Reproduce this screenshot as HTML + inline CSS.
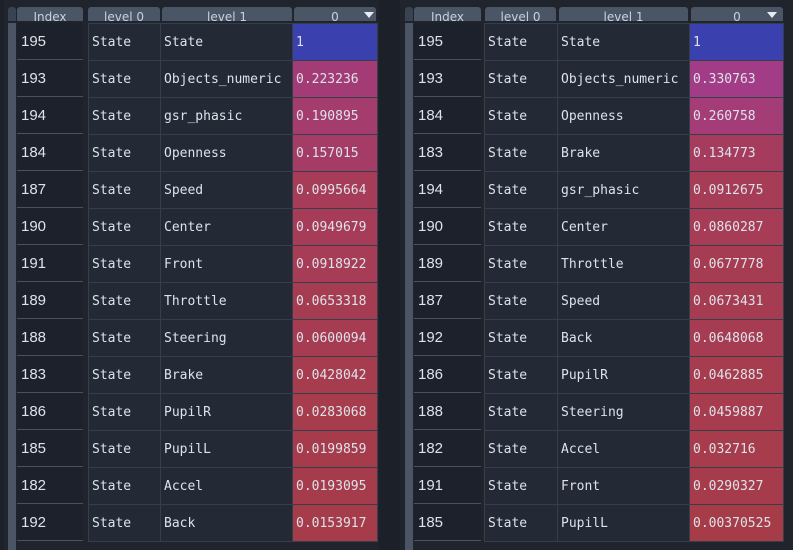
<!DOCTYPE html><html><head><style>
body{margin:0;width:793px;height:550px;background:#1b2029;overflow:hidden;position:relative;font-family:"DejaVu Sans Mono","Liberation Mono",monospace;color:#dde3ea}
.p{position:absolute;top:0;height:550px;background:#1f242d}
.g{position:absolute;top:23px;width:8px;height:527px;background:#4b5566}
.hd{position:absolute;top:7px;height:14px;background:#4a5566;color:#c9d1dc;font:12px "DejaVu Sans",sans-serif;text-align:center;line-height:20px;overflow:hidden;border-radius:3px 3px 0 0}
table{position:absolute;top:23px;border-collapse:collapse;table-layout:fixed}
td{height:34px;padding:2px 0 0 3px;font-size:13px;white-space:nowrap;overflow:hidden;vertical-align:middle;line-height:34px}
.d td{border:1px solid #363e4c;background:#232935}
.i td{border-bottom:1px solid #4a5262;background:#1c212b;font-family:"Liberation Sans",sans-serif;font-size:15px;padding:2px 0 0 4px;height:34px;line-height:34px}
.tri{position:absolute;top:12px;width:0;height:0;border-left:5px solid transparent;border-right:5px solid transparent;border-top:6px solid #e8ecf2}
</style></head><body>
<div class="p" style="left:4px;width:375px"></div>
<div class="p" style="left:400px;width:393px"></div>
<div class="g" style="left:8px"></div>
<div class="g" style="left:405px"></div>
<div class="hd" style="left:8px;width:8px;background:#3a4352"></div>
<div class="hd" style="left:17px;width:66px">Index</div>
<div class="hd" style="left:88px;width:72px">level 0</div>
<div class="hd" style="left:162px;width:130px">level 1</div>
<div class="hd" style="left:294px;width:82px">0</div>
<div class="tri" style="left:364px"></div>
<div class="hd" style="left:405px;width:8px;background:#3a4352"></div>
<div class="hd" style="left:414px;width:67px">Index</div>
<div class="hd" style="left:485px;width:71px">level 0</div>
<div class="hd" style="left:559px;width:129px">level 1</div>
<div class="hd" style="left:691px;width:92px">0</div>
<div class="tri" style="left:767px"></div>

<table class="i" style="left:17px;width:66px"><tr><td>195</td></tr><tr><td>193</td></tr><tr><td>194</td></tr><tr><td>184</td></tr><tr><td>187</td></tr><tr><td>190</td></tr><tr><td>191</td></tr><tr><td>189</td></tr><tr><td>188</td></tr><tr><td>183</td></tr><tr><td>186</td></tr><tr><td>185</td></tr><tr><td>182</td></tr><tr><td>192</td></tr></table>
<table class="d" style="left:88px;width:289px"><colgroup><col style="width:72px"><col style="width:132px"><col style="width:85px"></colgroup>
<tr><td>State</td><td>State</td><td style="background:#3a40ae">1</td></tr>
<tr><td>State</td><td>Objects_numeric</td><td style="background:#a33c76">0.223236</td></tr>
<tr><td>State</td><td>gsr_phasic</td><td style="background:#a43c6e">0.190895</td></tr>
<tr><td>State</td><td>Openness</td><td style="background:#a53c66">0.157015</td></tr>
<tr><td>State</td><td>Speed</td><td style="background:#a63c58">0.0995664</td></tr>
<tr><td>State</td><td>Center</td><td style="background:#a63c57">0.0949679</td></tr>
<tr><td>State</td><td>Front</td><td style="background:#a63c56">0.0918922</td></tr>
<tr><td>State</td><td>Throttle</td><td style="background:#a63c52">0.0653318</td></tr>
<tr><td>State</td><td>Steering</td><td style="background:#a63c51">0.0600094</td></tr>
<tr><td>State</td><td>Brake</td><td style="background:#a63c4e">0.0428042</td></tr>
<tr><td>State</td><td>PupilR</td><td style="background:#a63c4c">0.0283068</td></tr>
<tr><td>State</td><td>PupilL</td><td style="background:#a63c4b">0.0199859</td></tr>
<tr><td>State</td><td>Accel</td><td style="background:#a63c4b">0.0193095</td></tr>
<tr><td>State</td><td>Back</td><td style="background:#a63c4a">0.0153917</td></tr></table>

<table class="i" style="left:414px;width:67px"><tr><td>195</td></tr><tr><td>193</td></tr><tr><td>184</td></tr><tr><td>183</td></tr><tr><td>194</td></tr><tr><td>190</td></tr><tr><td>189</td></tr><tr><td>187</td></tr><tr><td>192</td></tr><tr><td>186</td></tr><tr><td>188</td></tr><tr><td>182</td></tr><tr><td>191</td></tr><tr><td>185</td></tr></table>
<table class="d" style="left:484px;width:299px"><colgroup><col style="width:73px"><col style="width:132px"><col style="width:94px"></colgroup>
<tr><td>State</td><td>State</td><td style="background:#3a40ae">1</td></tr>
<tr><td>State</td><td>Objects_numeric</td><td style="background:#a33c86">0.330763</td></tr>
<tr><td>State</td><td>Openness</td><td style="background:#a43c78">0.260758</td></tr>
<tr><td>State</td><td>Brake</td><td style="background:#a53c5e">0.134773</td></tr>
<tr><td>State</td><td>gsr_phasic</td><td style="background:#a63c56">0.0912675</td></tr>
<tr><td>State</td><td>Center</td><td style="background:#a63c55">0.0860287</td></tr>
<tr><td>State</td><td>Throttle</td><td style="background:#a63c52">0.0677778</td></tr>
<tr><td>State</td><td>Speed</td><td style="background:#a63c52">0.0673431</td></tr>
<tr><td>State</td><td>Back</td><td style="background:#a63c51">0.0648068</td></tr>
<tr><td>State</td><td>PupilR</td><td style="background:#a63c4e">0.0462885</td></tr>
<tr><td>State</td><td>Steering</td><td style="background:#a63c4e">0.0459887</td></tr>
<tr><td>State</td><td>Accel</td><td style="background:#a63c4c">0.032716</td></tr>
<tr><td>State</td><td>Front</td><td style="background:#a63c4b">0.0290327</td></tr>
<tr><td>State</td><td>PupilL</td><td style="background:#a63c48">0.00370525</td></tr></table>
</body></html>
